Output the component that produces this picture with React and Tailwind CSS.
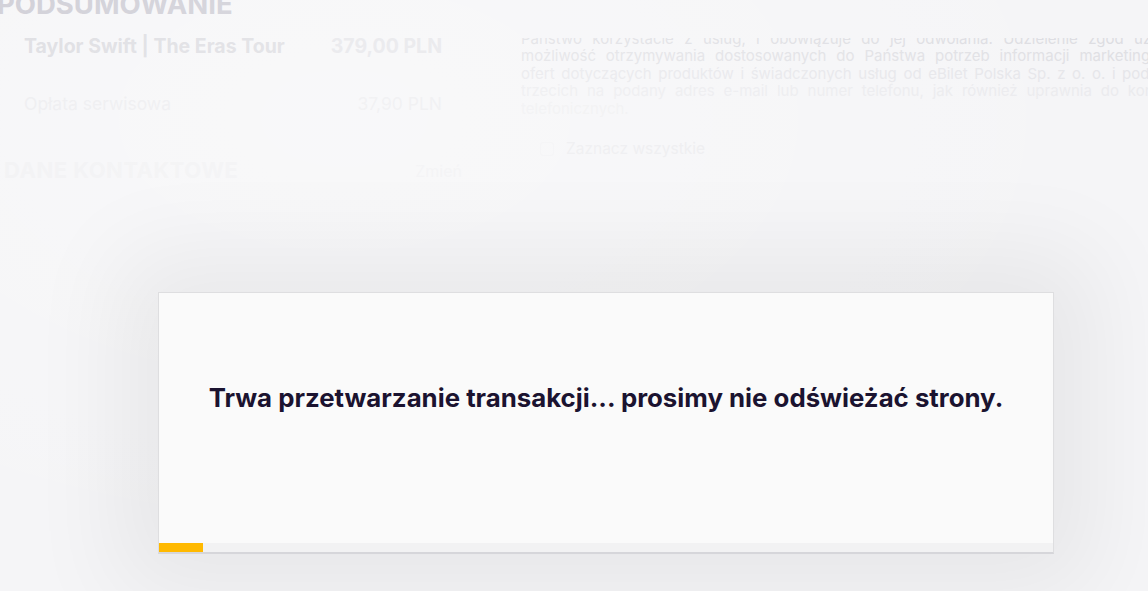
const consentLines = [
  { text: "Państwo korzystacie z usług, i obowiązuje do jej odwołania. Udzielenie zgód uzależnia", color: "text-[#dddde2]" },
  { text: "możliwość otrzymywania dostosowanych do Państwa potrzeb informacji marketingowych,", color: "text-[#e0e0e4]" },
  { text: "ofert dotyczących produktów i świadczonych usług od eBilet Polska Sp. z o. o. i podmiotów", color: "text-[#e6e6ea]" },
  { text: "trzecich na podany adres e-mail lub numer telefonu, jak również uprawnia do kontaktów", color: "text-[#ebebee]" },
];

const SummaryRow = ({ label, price, bold }) => (
  <div className="flex items-center justify-between w-[418px]">
    <span className={bold ? "font-bold text-[#d9d9de]" : "text-[#ebebee]"}>{label}</span>
    <span className={bold ? "font-bold text-[#e3e3e7]" : "text-[#ebebee]"}>{price}</span>
  </div>
);

const ProcessingModal = () => (
  <div className="absolute left-[158px] top-[292px] w-[896px] h-[262px] flex flex-col bg-[#fafafa] border border-[#dedee0] border-b-2 border-b-[#d6d6da] shadow-[0_0_90px_40px_rgba(0,0,0,0.06)]">
    <div className="flex-1 flex items-start justify-center pt-[90px]">
      <h2 className="text-[25.8px] leading-[30px] font-bold text-[#1b1330]">
        Trwa przetwarzanie transakcji... prosimy nie odświeżać strony.
      </h2>
    </div>
    <div className="h-[9px] bg-[#f2f2f3]">
      <div className="h-full w-[44px] bg-[#ffb900]" />
    </div>
  </div>
);

export default function App() {
  return (
    <div
      className="relative w-full h-[591px] overflow-hidden bg-[#f5f5f7]"
      style={{ fontFamily: "Inter, 'Noto Sans', sans-serif" }}
    >
      <div className="flex">
        <div className="flex flex-col w-[470px] shrink-0">
          <h1 className="text-[27.5px] leading-[27px] font-bold text-[#c9c8d1] -mt-[9px] -ml-[3px]">PODSUMOWANIE</h1>
          <div className="pl-[24px] mt-[16px] flex flex-col gap-[34px]">
            <div className="text-[19.5px] leading-[24px]">
              <SummaryRow label="Taylor Swift | The Eras Tour" price="379,00 PLN" bold />
            </div>
            <div className="text-[17.5px] leading-[24px]">
              <SummaryRow label="Opłata serwisowa" price="37,90 PLN" />
            </div>
          </div>
          <div className="flex justify-between items-center mt-[38px] pl-[4px] pr-[8px]">
            <span className="text-[22px] font-bold tracking-[0.5px] text-[#f0f0f2]">DANE KONTAKTOWE</span>
            <span className="text-[16px] text-[#f0f0f2]">Zmień</span>
          </div>
        </div>
        <div className="flex flex-col w-[680px] shrink-0 ml-[51px]">
          <div className="h-[79px] mt-[38px] overflow-hidden flex flex-col justify-end text-[15px] leading-[17.5px]">
            {consentLines.map((line) => (
              <p key={line.text} className={`shrink-0 text-justify [text-align-last:justify] ${line.color}`}>
                {line.text}
              </p>
            ))}
            <p className="shrink-0 text-[#efeff1]">telefonicznych.</p>
          </div>
          <div className="flex items-center gap-3 mt-[20px] pl-[19px]">
            <span className="w-[14px] h-[14px] rounded-[3px] border border-[#f2f2f4]" />
            <span className="text-[15.5px] text-[#ebebee]">Zaznacz wszystkie</span>
          </div>
        </div>
      </div>
      <div className="absolute inset-0 bg-[radial-gradient(ellipse_at_30%_20%,rgba(255,255,255,0.35),rgba(255,255,255,0)_70%)]" />
      <ProcessingModal />
    </div>
  );
}
